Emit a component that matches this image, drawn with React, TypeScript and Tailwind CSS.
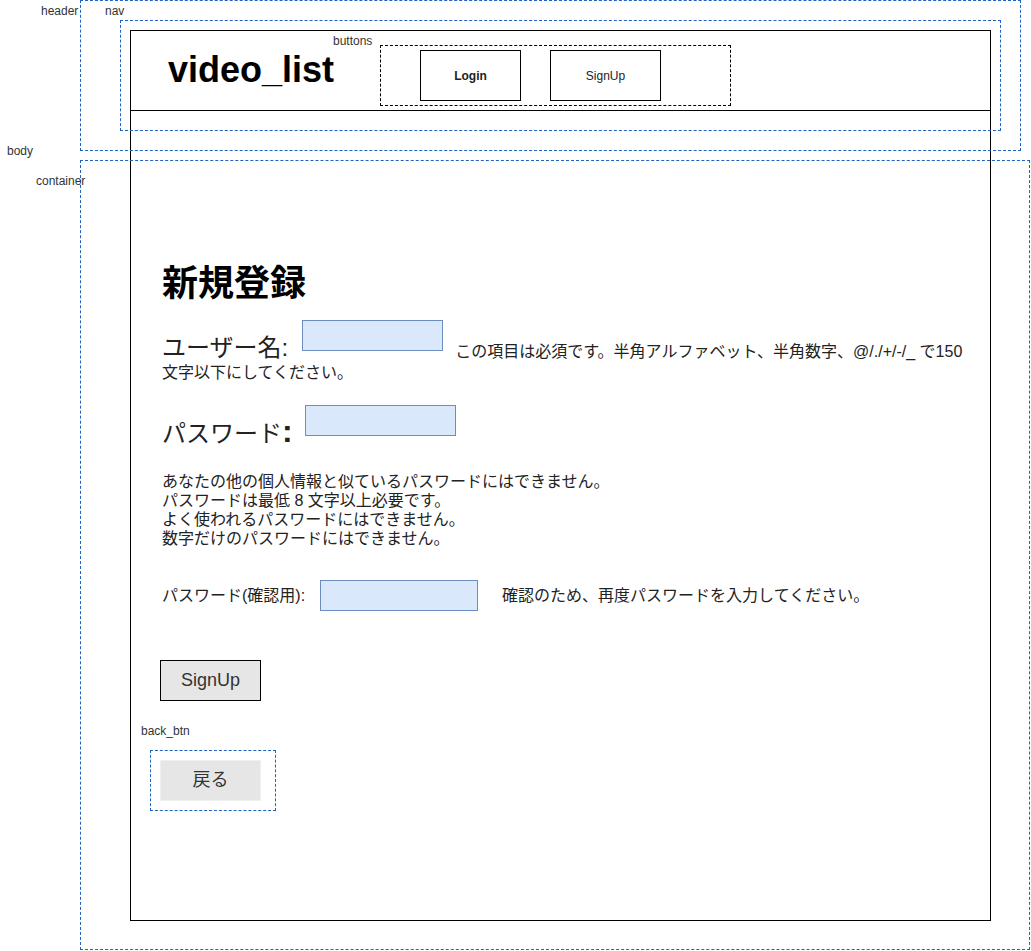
const blueBox = 'absolute border border-dashed border-[#2063be] pointer-events-none'
const note = 'absolute text-[12px] leading-[14px] text-[#333]'

export default function App() {
  return (
    <div className="relative w-[1031px] h-[951px] overflow-hidden bg-white text-[#222] font-['Liberation_Sans','Noto_Sans_CJK_JP',sans-serif]">
      {/* ── Wireframe frame ─────────────────────────────────────────── */}
      <div className="ml-[130px] mt-[30px] w-[861px] h-[891px] border border-black">
        <header className="h-[80px] border-b border-black flex items-start">
          <h1 className="w-[212px] ml-[37px] mt-[21px] text-[36px] font-bold leading-none text-black">video_list</h1>
          <div className="mt-[14px] w-[351px] h-[61px] border border-dashed border-black flex items-start pt-[4px] pl-[39px] gap-[29px]">
            <button className="w-[101px] h-[51px] border border-black text-[12px] font-bold text-[#222]">Login</button>
            <button className="w-[111px] h-[51px] border border-black text-[12px] text-[#222]">SignUp</button>
          </div>
        </header>

        <main className="pl-[31px]">
          <h2 className="mt-[155px] text-[36px] font-bold leading-none text-black">新規登録</h2>

          {/* username */}
          <div className="mt-[18px] flex items-start">
            <label className="mt-[16px] text-[24px] leading-[24px]">ユーザー名:</label>
            <div className="ml-[14px] w-[141px] h-[31px] bg-[#dae8fc] border border-[#6c8ebf]" />
            <span className="ml-[12px] mt-[24px] text-[16px] leading-[16px]">この項目は必須です。半角アルファベット、半角数字、@/./+/-/_ で150</span>
          </div>
          <p className="mt-[5px] text-[16px] leading-[16px]">文字以下にしてください。</p>

          {/* password */}
          <div className="mt-[24px] flex items-start">
            <label className="mt-[14px] text-[24px] leading-[24px]">
              パスワード<span className="text-[32px] leading-[24px] font-bold">:</span>
            </label>
            <div className="ml-[12px] w-[151px] h-[31px] bg-[#dae8fc] border border-[#6c8ebf]" />
          </div>
          <ul className="mt-[26px] text-[16px] leading-[19px]">
            <li>あなたの他の個人情報と似ているパスワードにはできません。</li>
            <li>パスワードは最低 8 文字以上必要です。</li>
            <li>よく使われるパスワードにはできません。</li>
            <li>数字だけのパスワードにはできません。</li>
          </ul>

          {/* password confirm */}
          <div className="mt-[32px] h-[31px] flex items-center text-[16px] leading-[16px]">
            <label>パスワード(確認用):</label>
            <div className="ml-[15px] w-[158px] h-[31px] bg-[#dae8fc] border border-[#6c8ebf]" />
            <span className="ml-[24px]">確認のため、再度パスワードを入力してください。</span>
          </div>

          <button className="-ml-[2px] mt-[49px] block w-[101px] h-[41px] bg-[#e6e6e6] border border-black text-[18px] text-[#333]">SignUp</button>

          <div className="-ml-[21px] mt-[23px] text-[12px] leading-[14px] text-[#333]">back_btn</div>
          <div className="-ml-[12px] mt-[12px] w-[126px] h-[61px] border border-dashed border-[#2063be] pt-[9px] pl-[9px]">
            <button className="block w-[101px] h-[41px] bg-[#e6e6e6] border border-[#f0f0f0] text-[18px] text-[#333]">戻る</button>
          </div>
        </main>
      </div>

      {/* ── Annotation boxes ───────────────────────────────────────── */}
      <div className={`${blueBox} left-[80px] top-0 w-[941px] h-[151px]`} />
      <div className={`${blueBox} left-[120px] top-[20px] w-[881px] h-[111px]`} />
      <div className={`${blueBox} left-[80px] top-[160px] w-[950px] h-[790px]`} />

      <span className={`${note} left-[41px] top-[4px]`}>header</span>
      <span className={`${note} left-[105px] top-[4px]`}>nav</span>
      <span className={`${note} left-[333px] top-[34px]`}>buttons</span>
      <span className={`${note} left-[7px] top-[144px]`}>body</span>
      <span className={`${note} left-[36px] top-[174px]`}>container</span>
    </div>
  )
}
